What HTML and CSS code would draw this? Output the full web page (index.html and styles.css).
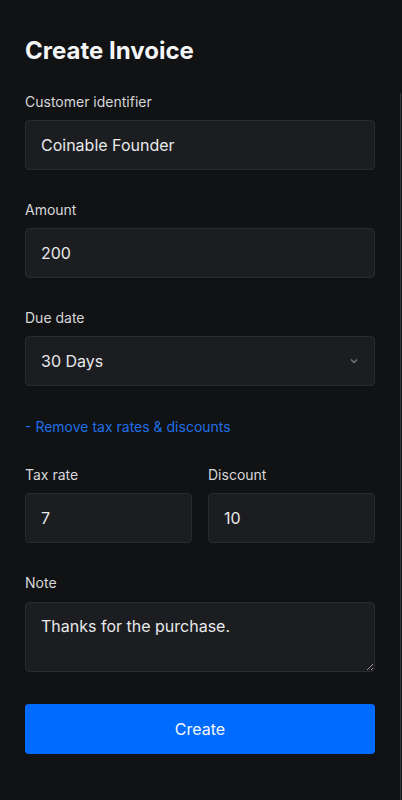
FILE: index.html
```html
<!DOCTYPE html>
<html lang="en">
<head>
<meta charset="utf-8">
<title>Create Invoice</title>
<link rel="stylesheet" href="styles.css">
</head>
<body>
<div class="edge"></div>
<main class="panel">
  <h1 class="title">Create Invoice</h1>
  <div class="field">
    <label class="label">Customer identifier</label>
    <div class="input">Coinable Founder</div>
  </div>
  <div class="field">
    <label class="label">Amount</label>
    <div class="input">200</div>
  </div>
  <div class="field">
    <label class="label">Due date</label>
    <div class="input select">
      <span>30 Days</span>
      <svg class="chev" width="8" height="6" viewBox="0 0 8 6"><path d="M1 1.5 L4 4.5 L7 1.5" fill="none" stroke="#77797e" stroke-width="1.4"/></svg>
    </div>
  </div>
  <a class="link">- Remove tax rates &amp; discounts</a>
  <div class="row">
    <div class="field">
      <label class="label">Tax rate</label>
      <div class="input">7</div>
    </div>
    <div class="field">
      <label class="label">Discount</label>
      <div class="input">10</div>
    </div>
  </div>
  <div class="field">
    <label class="label">Note</label>
    <textarea class="input note" rows="2">Thanks for the purchase.</textarea>
  </div>
  <button class="btn">Create</button>
</main>
</body>
</html>
```
FILE: styles.css
```css
* { box-sizing: border-box; }
html, body { margin: 0; height: 100%; }
body {
  background: #111214;
  font-family: Inter, "Noto Sans", sans-serif;
  color: #e4e5e7;
  position: relative;
  overflow: hidden;
}
.edge {
  position: absolute;
  left: 400px;
  top: 93px;
  bottom: 0;
  width: 1px;
  background: #35363a;
}
.panel {
  padding: 36px 27px 0 25px;
  display: flex;
  flex-direction: column;
}
.title {
  margin: 0 0 26px;
  font-size: 24px;
  line-height: 30px;
  font-weight: 700;
  color: #f4f5f7;
}
.field {
  display: flex;
  flex-direction: column;
  margin-bottom: 30px;
}
.label {
  font-size: 14px;
  line-height: 20px;
  color: #d6d7da;
  margin-bottom: 8px;
}
.input {
  height: 50px;
  background: #1c1d20;
  border: 1px solid #2a2b2f;
  border-radius: 4px;
  padding: 0 15px;
  display: flex;
  align-items: center;
  font-size: 16px;
  color: #e8e9eb;
  font-family: Inter, "Noto Sans", sans-serif;
}
.select { justify-content: space-between; }
.chev { margin-right: 1px; }
.link {
  font-size: 14px;
  line-height: 20px;
  color: #1f6fe6;
  margin: 1px 0 28px;
  cursor: pointer;
}
.row {
  display: grid;
  grid-template-columns: 1fr 1fr;
  column-gap: 16px;
}
.note {
  height: 70px;
  display: block;
  padding: 11px 15px;
  line-height: 24px;
  resize: vertical;
  outline: none;
  color-scheme: dark;
  width: 100%;
  margin-top: 1px;
}
.btn {
  margin-top: 2px;
  height: 50px;
  border: none;
  border-radius: 4px;
  background: #006bff;
  color: #f4f8ff;
  font-family: Inter, "Noto Sans", sans-serif;
  font-size: 16px;
}
```
